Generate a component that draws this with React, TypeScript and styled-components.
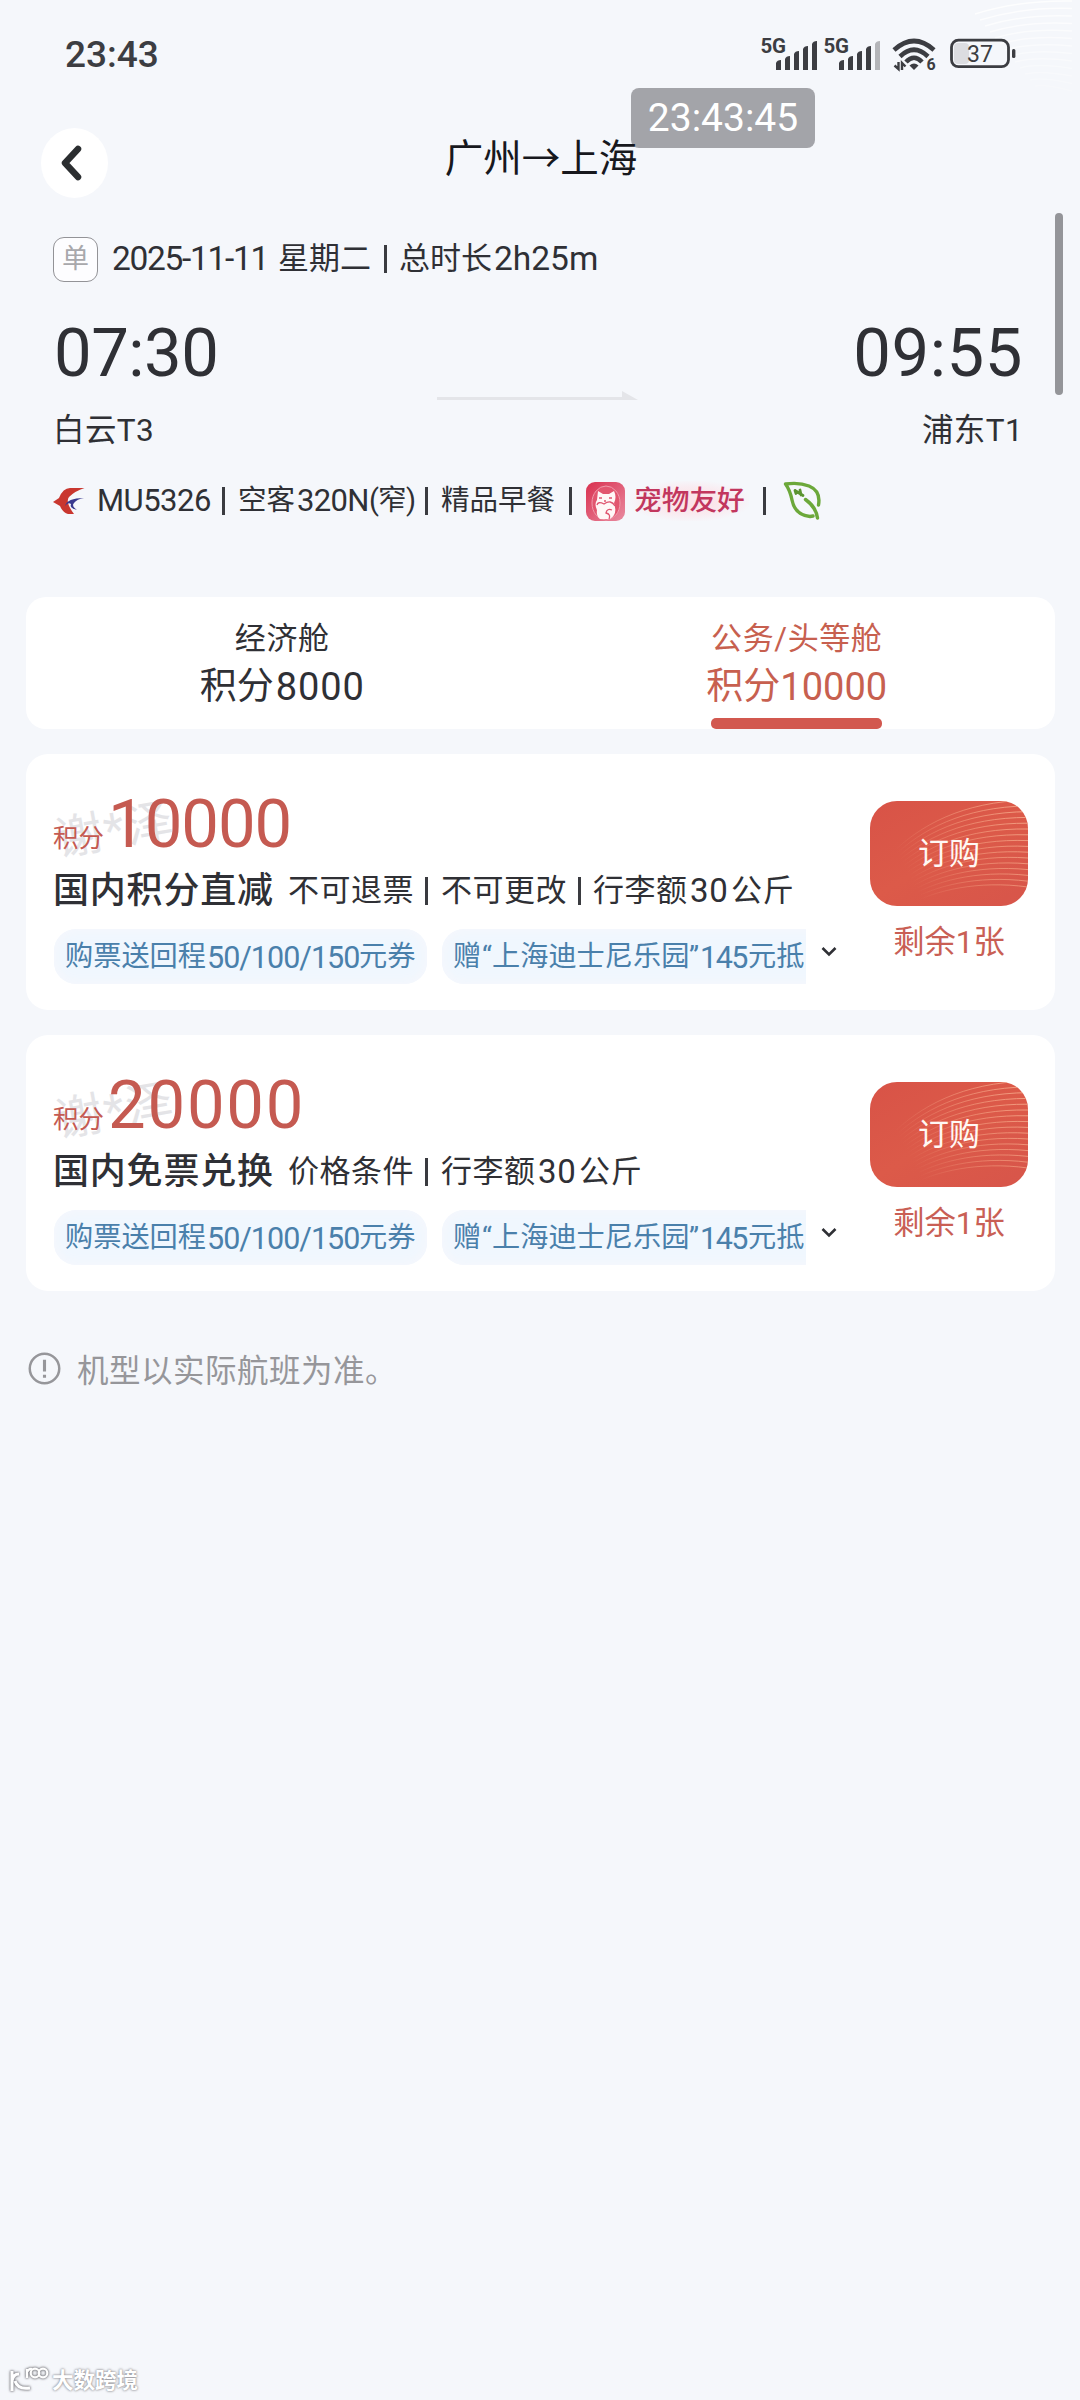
import React from "react";
import styled, { createGlobalStyle } from "styled-components";

const GlobalStyle = createGlobalStyle`
  * { box-sizing: border-box; }
  body {
    margin: 0;
    background: #f5f7fb;
    font-family: Roboto, "Noto Sans CJK SC", sans-serif;
    color: #2f3035;
  }
`;

const Screen = styled.main`
  position: relative;
  width: 1080px;
  height: 2400px;
  overflow: hidden;
  background: #f5f7fb;
`;

const TopWaves = styled.svg`
  position: absolute;
  top: 0;
  right: 0;
`;

const StatusBar = styled.header`
  position: relative;
  display: flex;
  justify-content: space-between;
  height: 108px;
  padding: 32px 64px 0 65px;
`;

const StatusTime = styled.div`
  font-size: 37px;
  font-weight: 500;
  line-height: 45px;
  color: #3c3d42;
`;

const StatusIcons = styled.div`
  display: flex;
  height: 44px;
`;

const ClockOverlay = styled.div`
  position: absolute;
  left: 631px;
  top: 88px;
  width: 184px;
  height: 60px;
  border-radius: 8px;
  background: #a3a4a9;
  color: #fff;
  font-size: 39px;
  line-height: 61px;
  text-align: center;
`;

const TitleBar = styled.div`
  position: relative;
  display: flex;
  align-items: center;
  justify-content: center;
  height: 110px;
`;

const BackButton = styled.button`
  position: absolute;
  left: 41px;
  top: 20px;
  width: 67px;
  height: 70px;
  padding: 0 5px 0 0;
  border: 0;
  border-radius: 50%;
  background: #fff;
  display: flex;
  align-items: center;
  justify-content: center;
`;

const Title = styled.h1`
  margin: -17px 0 0 2px;
  font: 400 38.5px/50px "Noto Sans CJK SC", sans-serif;
  color: #17181d;
`;

const ScrollThumb = styled.div`
  position: absolute;
  right: 17px;
  top: 213px;
  width: 8px;
  height: 182px;
  border-radius: 4px;
  background: #949599;
`;

const Flight = styled.section`
  display: flex;
  flex-direction: column;
  height: 379px;
  padding: 0 57px 0 53px;
`;

const Line = styled.div<{ $h: number; $mt?: number }>`
  display: flex;
  align-items: center;
  height: ${(p) => p.$h}px;
  margin-top: ${(p) => p.$mt ?? 0}px;
  white-space: nowrap;
`;

const Spread = styled(Line)`
  justify-content: space-between;
`;

/* A run of text that owns a fixed slice of its line. */
const Seg = styled.span<{ $w: number; $size: number; $ls?: number }>`
  flex: none;
  width: ${(p) => p.$w}px;
  font-size: ${(p) => p.$size}px;
  letter-spacing: ${(p) => p.$ls ?? 0}px;
  line-height: 1.3;
`;

const Bar = styled.span<{ $gap: number; $h?: number }>`
  flex: none;
  width: 3px;
  height: ${(p) => p.$h ?? 28}px;
  margin-right: ${(p) => p.$gap}px;
  background: #3a3b40;
`;

const TripBadge = styled.span`
  flex: none;
  width: 45px;
  height: 45px;
  margin-right: 14px;
  border: 1px solid #939397;
  border-radius: 11px;
  background: #fdfdff;
  color: #a8a8ac;
  font-size: 27px;
  line-height: 42px;
  text-align: center;
`;

const Clock = styled.span<{ $ls: number }>`
  margin-left: 1px;
  font-size: 67px;
  line-height: 70px;
  letter-spacing: ${(p) => p.$ls}px;
`;

const RouteArrow = styled.svg`
  align-self: flex-end;
  margin: 0 0 -13px 4px;
`;

const Place = styled.span`
  font-size: 31.5px;
  letter-spacing: 0.4px;
`;

const PetTag = styled.span`
  flex: none;
  display: flex;
  align-items: center;
  width: 177px;
  color: #c2375e;
  font-size: 27.7px;
  font-weight: 500;
`;

const PetText = styled.span`
  margin-left: 5px;
  padding: 0 4px;
  line-height: 40px;
  background: radial-gradient(ellipse, #fbe4e8 20%, #f9ecf1 50%, rgba(250, 238, 243, 0) 75%);
`;

const Content = styled.div`
  display: flex;
  flex-direction: column;
  gap: 25px;
  padding: 0 25px 0 26px;
`;

const Tabs = styled.nav`
  display: grid;
  grid-template-columns: 1fr 1fr;
  height: 132px;
  border-radius: 20px;
  background: #fff;
`;

const Tab = styled.button<{ $active?: boolean }>`
  display: flex;
  flex-direction: column;
  align-items: center;
  padding: 22px 2px 0 0;
  border: 0;
  background: none;
  font-family: inherit;
  color: ${(p) => (p.$active ? "#c7604f" : "#2f3035")};
`;

const TabName = styled.span`
  font-size: 31px;
  line-height: 40px;
  letter-spacing: 0.6px;
`;

const TabPoints = styled.span<{ $ls: number; $gap: number }>`
  display: flex;
  gap: ${(p) => p.$gap}px;
  margin-top: 3px;
  font-size: 37px;
  line-height: 50px;

  span + span {
    font-size: 38px;
    letter-spacing: ${(p) => p.$ls}px;
  }
`;

const TabUnderline = styled.span`
  width: 171px;
  height: 11px;
  margin-top: auto;
  border-radius: 5px;
  background: #d2584f;
`;

const Card = styled.article`
  display: flex;
  justify-content: space-between;
  height: 256px;
  padding: 0 27px;
  border-radius: 22px;
  background: #fff;
`;

const Info = styled.div`
  position: relative;
  width: 800px;
`;

const Masked = styled.span`
  position: absolute;
  left: 2px;
  top: 46px;
  display: flex;
  align-items: center;
  transform: rotate(-10deg);
  font-size: 47px;
  line-height: 60px;
  letter-spacing: 2px;
  color: #e4e4e7;
`;

const Price = styled.div`
  position: relative;
  display: flex;
  align-items: baseline;
  height: 77px;
  margin-top: 35px;
  color: #c55a51;
`;

const PriceUnit = styled.span`
  width: 55px;
  font-size: 25.5px;
`;

const PriceValue = styled.span<{ $ls: number }>`
  font-size: 67px;
  line-height: 70px;
  letter-spacing: ${(p) => p.$ls}px;
`;

const FareName = styled.h2`
  flex: none;
  width: 235px;
  margin: 0;
  font-size: 36px;
  line-height: 46px;
  font-weight: 500;
  letter-spacing: 0.8px;
`;

const Coupons = styled.div`
  display: flex;
  align-items: center;
  margin-top: 13px;
`;

const CouponClip = styled.div`
  display: flex;
  gap: 15px;
  width: 752px;
  margin-left: 1px;
  overflow: hidden;
`;

const Coupon = styled.div<{ $w: number }>`
  flex: none;
  display: flex;
  align-items: center;
  width: ${(p) => p.$w}px;
  height: 55px;
  padding: 2px 0 0 11px;
  border-radius: 22px;
  background: #f0f7fe;
  box-shadow: inset 0 0 10px 3px #f5f7fc;
  color: #4a80ab;
  white-space: nowrap;
`;

const Expand = styled.svg`
  flex: none;
  margin: 0 0 9px 15px;
`;

const Action = styled.div`
  display: flex;
  flex-direction: column;
  align-items: center;
  width: 158px;
  margin-top: 47px;
`;

const Buy = styled.button`
  position: relative;
  width: 158px;
  height: 105px;
  padding: 0;
  border: 0;
  border-radius: 27px;
  overflow: hidden;
  background: linear-gradient(150deg, #d85347 0%, #dc5a49 50%, #d7554a 100%);
  color: #fff8f4;
  font-family: inherit;
  font-size: 31px;
`;

const BuyWaves = styled.svg`
  position: absolute;
  inset: 0;
`;

const BuyLabel = styled.span`
  position: relative;
  line-height: 40px;
`;

const Left = styled.span`
  margin-top: 17px;
  font-size: 31.3px;
  line-height: 40px;
  color: #c95f55;
`;

const Notice = styled.p`
  display: flex;
  align-items: center;
  gap: 16px;
  margin: 53px 0 0 2px;
  height: 48px;
  font-size: 31.5px;
  letter-spacing: 0.5px;
  color: #96969a;
`;

const SiteMark = styled.div`
  position: absolute;
  left: 8px;
  top: 2362px;
  display: flex;
  align-items: center;
  gap: 2px;
  height: 34px;
  color: #fff;
  font: 700 21.5px/34px "Noto Sans CJK SC", sans-serif;
  text-shadow: 0 0 2px #8d8d92, 0 0 3px #a0a0a5;

  svg { filter: drop-shadow(0 0 1px #77777c) drop-shadow(0 0 1px #a0a0a5); }
`;

function Signal({ weak }: { weak?: boolean }) {
  const tops = [28, 24, 19, 14, 9];
  return (
    <svg width="63" height="44" viewBox="0 0 63 44" fill="#3c3d42">
      <text x="-0.5" y="20.500" fontSize="20.5" fontWeight="700" fontFamily="Roboto, sans-serif" letterSpacing="-0.3">5G</text>
      {tops.map((t, i) => (
        <path
          key={t}
          d={`M${15 + i * 9} ${t + 3}q1-3 5-3V38h-5Z`}
          fill={weak && i === 4 ? "#b4b5b9" : "#3c3d42"}
        />
      ))}
    </svg>
  );
}

function Wifi() {
  return (
    <svg width="61" height="44" viewBox="0 0 61 44" fill="none" stroke="#3c3d42" strokeWidth="4.6">
      <path d="M7 18Q27 0 47 18" />
      <path d="M13 24.500Q27 11 41 24.500" />
      <path d="M19 30Q27 21.500 35 30" />
      <path d="M22.500 33.500Q27 29.500 31.500 33.500L27 38Z" fill="#3c3d42" stroke="none" />
      <path d="M11.500 30v7l-4-3.500M15 38v-7l3.500 3.500" strokeWidth="2.400" />
      <text x="39.500" y="38" fontSize="16" fontWeight="700" fontFamily="Roboto, sans-serif" fill="#3c3d42" stroke="none">6</text>
    </svg>
  );
}

function Battery() {
  return (
    <svg width="68" height="44" viewBox="0 0 68 44">
      <rect x="6" y="11" width="15" height="21" rx="4" fill="#dcdde1" />
      <rect x="3.500" y="8.200" width="57" height="26.500" rx="7" fill="none" stroke="#3c3d42" strokeWidth="2.800" />
      <rect x="64" y="17" width="3.400" height="9" rx="1.500" fill="#3c3d42" />
      <text x="32" y="30" textAnchor="middle" fontSize="23" fontFamily="Roboto, sans-serif" fill="#3c3d42">37</text>
    </svg>
  );
}

function AirlineLogo() {
  return (
    <svg width="44" height="30" viewBox="0 0 44 30" style={{ flex: "none" }}>
      <path d="M31.500 2Q22 5 16 11Q12 16 21 28H15Q10 27 7 20L0 16L6 12Q10 2 17 2Z" fill="#c9372f" />
      <path d="M31 12Q14 12 12 20Q15 16 18 18Q16 22 24 24Q18 20 21 17Q24 13 31 12Z" fill="#3a3a8f" />
    </svg>
  );
}

function PetIcon() {
  return (
    <svg width="39" height="39" viewBox="0 0 39 39" style={{ flex: "none" }}>
      <defs>
        <linearGradient id="pet" x1="0" x2="1" y1="0" y2="1">
          <stop offset="0" stopColor="#d9304f" />
          <stop offset="1" stopColor="#e98ba0" />
        </linearGradient>
      </defs>
      <rect width="39" height="39" rx="9" fill="url(#pet)" />
      <ellipse cx="20" cy="21" rx="14" ry="17" fill="#e2566f" stroke="#f09bab" strokeWidth="1" />
      <path d="M11 18L12 9L17 12H23L28 9Q31 15 28 21Q32 32 24 37H14Q10 34 11 28Q8 22 11 18Z" fill="#fff7f7" />
      <path d="M11 23Q12 19 18 22Q25 17 29 24M13 16h3M23 16h3M18 19h2M26 28Q21 26 20 31Q25 32 23 37" fill="none" stroke="#df5570" strokeWidth="1.300" />
    </svg>
  );
}

function Leaf() {
  return (
    <svg width="40" height="40" viewBox="0 0 40 40" fill="none" stroke="#6ca83a" strokeWidth="3.400" strokeLinecap="round" strokeLinejoin="round">
      <path d="M35.500 24Q38 10 26 5Q16 1 2.500 3Q7 9 9 19Q12 34 27 35.500L30 35" />
      <path d="M22.500 18.500Q33 26 34.500 37" />
      <path d="M12 9.500L20 14.500M12 9.500l1 3M17 9l1 5" strokeWidth="2.800" stroke="#5b9430" />
    </svg>
  );
}

function Waves({ id }: { id: string }) {
  return (
    <BuyWaves width="158" height="105" viewBox="0 0 158 105" fill="none" stroke={`url(#${id})`} strokeWidth="1">
      <defs>
        <linearGradient id={id} gradientUnits="userSpaceOnUse" x1="20" x2="158" y1="90" y2="20">
          <stop offset="0.15" stopColor="#f29a7c" stopOpacity="0" />
          <stop offset="0.6" stopColor="#f29a7c" stopOpacity="0.6" />
          <stop offset="1" stopColor="#f5a688" stopOpacity="0.9" />
        </linearGradient>
      </defs>
      {Array.from({ length: 16 }, (_, i) => (
        <path
          key={i}
          d={`M${20 + i * 1.5} ${54 + i * 3.2}C${50 + i} ${24 + i * 4.4} ${92 + i} ${1 + i * 5.2} 158 ${-1 + i * 5.8}`}
        />
      ))}
    </BuyWaves>
  );
}

interface Fare {
  points: string;
  spacing: number;
  name: string;
  details: React.ReactNode;
}

const fares: Fare[] = [
  {
    points: "10000",
    spacing: -1,
    name: "国内积分直减",
    details: (
      <>
        <Seg $w={137} $size={31} $ls={0.5}>不可退票</Seg>
        <Bar $gap={13} />
        <Seg $w={137} $size={31} $ls={0.5}>不可更改</Seg>
        <Bar $gap={12} />
        <Seg $w={97} $size={31} $ls={0.5}>行李额</Seg>
        <Seg $w={41} $size={33} $ls={0.8}>30</Seg>
        <Seg $w={64} $size={31} $ls={0.7}>公斤</Seg>
      </>
    ),
  },
  {
    points: "20000",
    spacing: 1.8,
    name: "国内免票兑换",
    details: (
      <>
        <Seg $w={137} $size={31} $ls={0.5}>价格条件</Seg>
        <Bar $gap={13} />
        <Seg $w={97} $size={31} $ls={0.5}>行李额</Seg>
        <Seg $w={41} $size={33} $ls={0.8}>30</Seg>
        <Seg $w={64} $size={31} $ls={0.7}>公斤</Seg>
      </>
    ),
  },
];

function FareCard({ fare }: { fare: Fare }) {
  return (
    <Card>
      <Info>
        <Masked>谢*泽</Masked>
        <Price>
          <PriceUnit>积分</PriceUnit>
          <PriceValue $ls={fare.spacing}>{fare.points}</PriceValue>
        </Price>
        <Line $h={50}>
          <FareName>{fare.name}</FareName>
          {fare.details}
        </Line>
        <Coupons>
          <CouponClip>
            <Coupon $w={373}>
              <Seg $w={142} $size={28.2}>购票送回程</Seg>
              <Seg $w={152} $size={30.5} $ls={-1}>50/100/150</Seg>
              <Seg $w={60} $size={28.2}>元券</Seg>
            </Coupon>
            <Coupon $w={440}>
              <Seg $w={29} $size={28.2}>赠</Seg>
              <Seg $w={10} $size={28}>“</Seg>
              <Seg $w={197} $size={28.2}>上海迪士尼乐园</Seg>
              <Seg $w={11} $size={28}>”</Seg>
              <Seg $w={48} $size={30.5} $ls={-1.5}>145</Seg>
              <Seg $w={60} $size={28.2}>元抵</Seg>
            </Coupon>
          </CouponClip>
          <Expand width="16" height="12" viewBox="0 0 16 12" fill="none" stroke="#2f3035" strokeWidth="2.6">
            <path d="M1.500 2L8 8.500L14.500 2" />
          </Expand>
        </Coupons>
      </Info>
      <Action>
        <Buy>
          <Waves id={`wave-${fare.points}`} />
          <BuyLabel>订购</BuyLabel>
        </Buy>
        <Left>剩余1张</Left>
      </Action>
    </Card>
  );
}

export default function App() {
  return (
    <Screen>
      <GlobalStyle />
      <TopWaves width="200" height="110" viewBox="0 0 200 110" fill="none" stroke="#fff" strokeWidth="1.5">
        {Array.from({ length: 13 }, (_, i) => (
          <path key={i} opacity={0.8 - i * 0.05} d={`M${95 + i * 5} ${14 + i * 6}Q${140 + i * 2} ${i * 7} 192 ${1 + i * 7.5}`} />
        ))}
      </TopWaves>
      <StatusBar>
        <StatusTime>23:43</StatusTime>
        <StatusIcons>
          <Signal />
          <Signal weak />
          <Wifi />
          <Battery />
        </StatusIcons>
        <ClockOverlay>23:43:45</ClockOverlay>
      </StatusBar>
      <TitleBar>
        <BackButton aria-label="返回">
          <svg width="24" height="38" viewBox="0 0 24 38" fill="none" stroke="#2b2e30" strokeWidth="6.5" strokeLinecap="round" strokeLinejoin="round">
            <path d="M18 5L5 19L18 33" />
          </svg>
        </BackButton>
        <Title>广州→上海</Title>
      </TitleBar>
      <ScrollThumb />
      <Flight>
        <Line $h={46} $mt={18}>
          <TripBadge>单</TripBadge>
          <Seg $w={166} $size={33.5} $ls={-1.3}>2025-11-11</Seg>
          <Seg $w={106} $size={31}>星期二</Seg>
          <Bar $gap={12} />
          <Seg $w={95} $size={31}>总时长</Seg>
          <Seg $w={110} $size={33.5}>2h25m</Seg>
        </Line>
        <Spread $h={76} $mt={33}>
          <Clock $ls={-0.5}>07:30</Clock>
          <RouteArrow width="204" height="14" viewBox="0 0 204 14" fill="#e4e5e9">
            <path d="M2 7H187V1L203 10H2Z" />
          </RouteArrow>
          <Clock $ls={0.6}>09:55</Clock>
        </Spread>
        <Spread $h={46} $mt={13}>
          <Place>白云T3</Place>
          <Place>浦东T1</Place>
        </Spread>
        <Line $h={46} $mt={28}>
          <AirlineLogo />
          <Seg $w={125} $size={31} $ls={-0.5}>MU5326</Seg>
          <Bar $gap={13} />
          <Seg $w={59} $size={28.5}>空客</Seg>
          <Seg $w={72} $size={31} $ls={-0.7}>320N</Seg>
          <Seg $w={9} $size={29}>(</Seg>
          <Seg $w={28} $size={28.5}>窄</Seg>
          <Seg $w={19} $size={29}>)</Seg>
          <Bar $gap={13} />
          <Seg $w={128} $size={28.5}>精品早餐</Seg>
          <Bar $gap={14} />
          <PetTag>
            <PetIcon />
            <PetText>宠物友好</PetText>
          </PetTag>
          <Bar $gap={17} />
          <Leaf />
        </Line>
      </Flight>
      <Content>
        <Tabs>
          <Tab>
            <TabName>经济舱</TabName>
            <TabPoints $ls={0.9} $gap={2}>
              <span>积分</span>
              <span>8000</span>
            </TabPoints>
          </Tab>
          <Tab $active>
            <TabName>公务/头等舱</TabName>
            <TabPoints $ls={0} $gap={0}>
              <span>积分</span>
              <span>10000</span>
            </TabPoints>
            <TabUnderline />
          </Tab>
        </Tabs>
        {fares.map((fare) => (
          <FareCard key={fare.points} fare={fare} />
        ))}
      </Content>
      <Content>
        <Notice>
          <svg width="33" height="33" viewBox="0 0 32 32" fill="none" stroke="#96969a" strokeWidth="2.4">
            <circle cx="16" cy="16" r="14.300" />
            <path d="M16 7.500V19M16 22v3" strokeWidth="3" />
          </svg>
          机型以实际航班为准。
        </Notice>
      </Content>
      <SiteMark>
        <svg width="42" height="30" viewBox="0 0 42 30" fill="none" stroke="#fff" strokeWidth="3">
          <path d="M4 7V27M4 17Q5 10 11 10M7 17Q10 26 22 24" />
          <path d="M19 14V5M19 8Q21 4 24 5" strokeWidth="2.2" />
          <circle cx="27" cy="9" r="4.300" strokeWidth="2.2" />
          <circle cx="35" cy="9" r="4.300" strokeWidth="2.2" />
        </svg>
        大数跨境
      </SiteMark>
    </Screen>
  );
}
